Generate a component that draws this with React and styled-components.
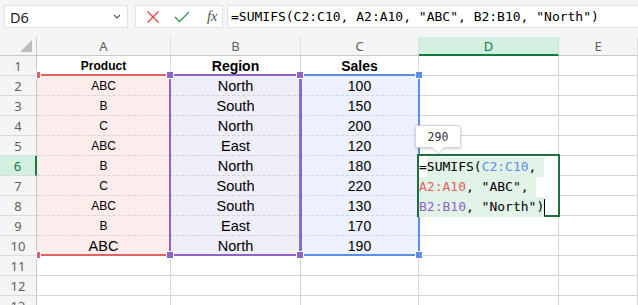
import React from 'react';
import styled, { createGlobalStyle } from 'styled-components';

const GlobalStyle = createGlobalStyle`
  body {
    margin: 0;
    background: #fff;
    font-family: "Liberation Sans", Arial, sans-serif;
    overflow: hidden;
  }
`;

const MONO = `"DejaVu Sans Mono", "Liberation Mono", monospace`;
const UI = `"Noto Sans", "Open Sans", sans-serif`;

const tones = {
  red: { fill: '#fdecec', line: '#ddd0d1', edge: '#e06265' },
  purple: { fill: '#efedf8', line: '#d3cfdd', edge: '#8e63c6' },
  blue: { fill: '#ecf1fd', line: '#cfd6e4', edge: '#5b8ee6' },
};

const Page = styled.div`
  width: 638px;
  height: 305px;
  overflow: hidden;
  background: #f5f5f5;
`;

const FormulaBar = styled.div`
  display: flex;
  height: 23px;
  padding: 5px 0 9px 4px;
`;

const NameBox = styled.div`
  width: 124px;
  box-sizing: border-box;
  display: flex;
  align-items: center;
  justify-content: space-between;
  padding: 0 6px 0 5px;
  background: #fff;
  border: 1px solid #e3e3e3;
  font-family: ${UI};
  font-size: 14.5px;
  color: #1f1f1f;
`;

const IconBox = styled.div`
  width: 88px;
  box-sizing: border-box;
  margin-left: 7px;
  display: flex;
  align-items: center;
  gap: 14px;
  padding-left: 10px;
  background: #fff;
  border: 1px solid #e3e3e3;
`;

const Fx = styled.span`
  font-family: "Liberation Serif", serif;
  font-style: italic;
  font-size: 15px;
  color: #555;
  margin-left: 3px;
  letter-spacing: -0.5px;
`;

const FormulaInput = styled.div`
  flex: 1;
  margin-left: 4px;
  display: flex;
  align-items: center;
  padding-left: 3px;
  background: #fff;
  border: 1px solid #e3e3e3;
  border-right: none;
  font-family: ${MONO};
  font-size: 13px;
  color: #000;
  white-space: pre;
`;

const Sheet = styled.div`
  position: relative;
  display: grid;
  grid-template-columns: 37px 134px 130px 118px 140px 1fr;
  grid-template-rows: 19px repeat(13, 20px);
  background: #fff;
`;

const Corner = styled.div`
  background: #f5f5f5;
  border-right: 1px solid #c8c8c8;
  border-bottom: 1px solid #c8c8c8;
  display: flex;
  align-items: flex-end;
  justify-content: flex-end;
  padding: 0 4px 3px 0;

  &::after {
    content: '';
    width: 0;
    height: 0;
    border-left: 12px solid transparent;
    border-bottom: 12px solid #bcbcbc;
  }
`;

const ColHead = styled.div`
  box-sizing: border-box;
  background: ${(p) => (p.$active ? '#d3efdf' : '#f5f5f5')};
  border-right: 1px solid ${(p) => (p.$active ? '#c7e3d2' : '#dedede')};
  border-bottom: ${(p) => (p.$active ? '2px solid #137a40' : '1px solid #c8c8c8')};
  color: ${(p) => (p.$active ? '#137a40' : '#5f5f5f')};
  font-family: ${UI};
  font-size: 13px;
  line-height: 18px;
  text-align: center;
`;

const RowHead = styled.div`
  box-sizing: border-box;
  background: ${(p) => (p.$active ? '#d3efdf' : '#f5f5f5')};
  border-right: ${(p) => (p.$active ? '2px solid #137a40' : '1px solid #c8c8c8')};
  border-bottom: 1px solid #dcdcdc;
  color: ${(p) => (p.$active ? '#137a40' : '#5f5f5f')};
  font-family: ${UI};
  font-size: 13px;
  line-height: 20px;
  text-align: center;
`;

const Cell = styled.div`
  box-sizing: border-box;
  background: ${(p) => (p.$tone ? tones[p.$tone].fill : '#fff')};
  border-right: 1px solid #d6d6d6;
  border-bottom: 1px ${(p) => (p.$tone ? 'dashed' : 'solid')} ${(p) => (p.$tone ? tones[p.$tone].line : '#d6d6d6')};
  color: #000;
  font-size: ${(p) => p.$size || 14.5}px;
  font-weight: ${(p) => (p.$bold ? 700 : 400)};
  line-height: 20px;
  text-align: center;
  white-space: nowrap;
  overflow: hidden;
`;

const Range = styled.div`
  position: absolute;
  box-sizing: border-box;
  top: 37px;
  height: 182px;
  left: ${(p) => p.$left}px;
  width: ${(p) => p.$width}px;
  border-top: 2px solid ${(p) => tones[p.$tone].edge};
  border-bottom: 2px solid ${(p) => tones[p.$tone].edge};
  border-left: ${(p) => (p.$sides ? `2px solid ${tones[p.$tone].edge}` : 'none')};
  border-right: ${(p) => (p.$sides ? `2px solid ${tones[p.$tone].edge}` : 'none')};
  pointer-events: none;
`;

const Handle = styled.div`
  position: absolute;
  box-sizing: border-box;
  width: ${(p) => p.$w || 6}px;
  height: 6px;
  left: ${(p) => p.$x}px;
  top: ${(p) => p.$y}px;
  background: ${(p) => tones[p.$tone].edge};
  outline: 1px solid #fff;
`;

const Tooltip = styled.div`
  position: absolute;
  left: 415px;
  top: 88px;
  width: 46px;
  height: 23px;
  box-sizing: border-box;
  background: #fff;
  border: 1px solid #d4d4d4;
  border-radius: 2px;
  box-shadow: 0 1px 3px rgba(0, 0, 0, 0.18);
  font-family: ${MONO};
  font-size: 11.5px;
  color: #333;
  display: flex;
  align-items: center;
  justify-content: center;

  &::after {
    content: '';
    position: absolute;
    left: 18px;
    bottom: -6px;
    width: 8px;
    height: 8px;
    background: #fff;
    border-right: 1px solid #d4d4d4;
    border-bottom: 1px solid #d4d4d4;
    transform: rotate(45deg);
  }
`;

const Editor = styled.div`
  position: absolute;
  left: 417px;
  top: 117px;
  width: 143px;
  height: 63px;
  box-sizing: border-box;
  border: 2px solid #1e6f3d;
  background: #fff;
  padding-top: 1px;
  font-family: ${MONO};
  font-size: 13px;
  line-height: 20px;
  white-space: pre;
  color: #000;
`;

const Line = styled.div`
  display: flex;
  height: 20px;
`;

const Sel = styled.span`
  background: #e0f3e6;
`;

const Ref = styled.span`
  color: ${(p) => tones[p.$tone].edge};
`;

const Caret = styled.span`
  display: inline-block;
  width: 1px;
  height: 17px;
  margin-top: 2px;
  background: #000;
`;

const data = [
  ['ABC', 'North', 100],
  ['B', 'South', 150],
  ['C', 'North', 200],
  ['ABC', 'East', 120],
  ['B', 'North', 180],
  ['C', 'South', 220],
  ['ABC', 'South', 130],
  ['B', 'East', 170],
  ['ABC', 'North', 190],
];

const cols = ['A', 'B', 'C', 'D', 'E'];

const Chevron = () => (
  <svg width="8" height="5" viewBox="0 0 8 5">
    <path d="M1 1l3 3 3-3" fill="none" stroke="#555" strokeWidth="1.1" />
  </svg>
);

const Cross = () => (
  <svg width="14" height="14" viewBox="0 0 14 14">
    <path d="M1.5 1.5l11 11M12.5 1.5l-11 11" stroke="#e4463f" strokeWidth="1.3" />
  </svg>
);

const Check = () => (
  <svg width="16" height="12" viewBox="0 0 16 12">
    <path d="M1 6l4.5 4.5L15 1" fill="none" stroke="#2f9a4d" strokeWidth="1.3" />
  </svg>
);

const App = () => {
  const rows = [];
  for (let r = 1; r <= 13; r++) {
    const d = data[r - 2];
    rows.push(
      <React.Fragment key={r}>
        <RowHead $active={r === 6}>{r}</RowHead>
        {r === 1 ? (
          <>
            <Cell $bold $size={12}>Product</Cell>
            <Cell $bold $size={14}>Region</Cell>
            <Cell $bold $size={14}>Sales</Cell>
          </>
        ) : d ? (
          <>
            <Cell $tone="red" $size={r === 10 ? 14.5 : 12}>{d[0]}</Cell>
            <Cell $tone="purple">{d[1]}</Cell>
            <Cell $tone="blue" $size={14}>{d[2]}</Cell>
          </>
        ) : (
          <>
            <Cell />
            <Cell />
            <Cell />
          </>
        )}
        <Cell />
        <Cell />
      </React.Fragment>
    );
  }

  return (
    <Page>
      <GlobalStyle />
      <FormulaBar>
        <NameBox>
          D6
          <Chevron />
        </NameBox>
        <IconBox>
          <Cross />
          <Check />
          <Fx>fx</Fx>
        </IconBox>
        <FormulaInput>=SUMIFS(C2:C10, A2:A10, "ABC", B2:B10, "North")</FormulaInput>
      </FormulaBar>

      <Sheet>
        <Corner />
        {cols.map((c) => (
          <ColHead key={c} $active={c === 'D'}>{c}</ColHead>
        ))}
        {rows}

        <Range $tone="red" $left={37} $width={134} />
        <Range $tone="blue" $left={299} $width={121} $sides />
        <Range $tone="purple" $left={169} $width={133} $sides />

        <Handle $tone="red" $x={37} $y={35} $w={3} />
        <Handle $tone="red" $x={37} $y={215} $w={3} />
        <Handle $tone="blue" $x={416} $y={35} />
        <Handle $tone="blue" $x={416} $y={215} />
        <Handle $tone="purple" $x={167} $y={35} />
        <Handle $tone="purple" $x={297} $y={35} />
        <Handle $tone="purple" $x={167} $y={215} />
        <Handle $tone="purple" $x={297} $y={215} />

        <Tooltip>290</Tooltip>
        <Editor>
          <Line>
            =<Sel>SUMIFS(<Ref $tone="blue">C2:C10</Ref>, </Sel>
          </Line>
          <Line>
            <Sel><Ref $tone="red">A2:A10</Ref>, "ABC", </Sel>
          </Line>
          <Line>
            <Sel><Ref $tone="purple">B2:B10</Ref>, "North")</Sel>
            <Caret />
          </Line>
        </Editor>
      </Sheet>
    </Page>
  );
};

export default App;
